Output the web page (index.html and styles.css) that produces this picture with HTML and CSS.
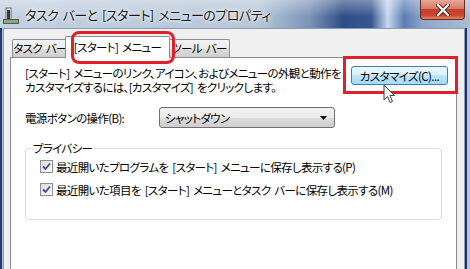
FILE: index.html
```html
<!DOCTYPE html>
<html lang="ja">
<head>
    <meta charset="UTF-8">
    <meta name="viewport" content="width=device-width, initial-scale=1.0">
    <title>タスク バーと [スタート] メニューのプロパティ</title>
    <link rel="stylesheet" href="styles.css">
</head>
<body>
    <div class="window">
        <div class="titlebar">
            <svg class="app-icon" width="16" height="17" viewBox="0 0 16 17">
                <rect x="3" y="1" width="5" height="12" fill="#f4f4f4" stroke="#6b6b6b"/>
                <rect x="4" y="3" width="3" height="9" fill="#3b3b3b"/>
                <rect x="0.5" y="12.5" width="15" height="4" fill="#8fa58a" stroke="#4d5d4a"/>
            </svg>
            <span class="title">タスク バーと [スタート] メニューのプロパティ</span>
            <div class="close">
                <svg width="14" height="12" viewBox="0 0 14 12">
                    <path d="M2 1 L12 11 M12 1 L2 11" stroke="#5a1f17" stroke-width="4" stroke-linecap="round"/>
                    <path d="M2 1 L12 11 M12 1 L2 11" stroke="#ffffff" stroke-width="2.2" stroke-linecap="round"/>
                </svg>
            </div>
        </div>
        <div class="frame">
            <div class="client">
                <div class="tabs">
                    <div class="tab tab-taskbar">タスク バー</div>
                    <div class="tab selected">
                        [スタート] メニュー
                        <span class="mark mark-tab"></span>
                    </div>
                    <div class="tab tab-toolbar">ツール バー</div>
                </div>
                <div class="panel">
                    <div class="intro">
                        <p>[スタート] メニューのリンク、アイコン、およびメニューの外観と動作を<br>カスタマイズするには、[カスタマイズ] をクリックします。</p>
                        <div class="btn-wrap">
                            <button class="btn hover">カスタマイズ(C)...</button>
                            <span class="mark mark-btn"></span>
                            <svg class="cursor" width="13" height="21" viewBox="0 0 13 21">
                                <path d="M1 1 L1 16 L4.5 12.5 L7 18.5 L9.5 17.5 L7 11.5 L11.5 11.5 Z" fill="#f4f6f8" stroke="#3a3f46" stroke-width="1" stroke-linejoin="round"/>
                            </svg>
                        </div>
                    </div>
                    <div class="power-row">
                        <label for="power">電源ボタンの操作(B):</label>
                        <div class="combo" id="power">
                            <span>シャットダウン</span>
                            <svg width="7" height="4" viewBox="0 0 7 4"><path d="M0 0 H7 L3.5 4 Z" fill="#000"/></svg>
                        </div>
                    </div>
                    <fieldset class="group">
                        <legend>プライバシー</legend>
                        <div class="check-row">
                            <span class="check">
                                <svg width="9" height="9" viewBox="0 0 9 9"><path d="M1 4.5 L3.5 7 L8 1.5" fill="none" stroke="#3d4e86" stroke-width="1.8"/></svg>
                            </span>
                            最近開いたプログラムを [スタート] メニューに保存し表示する(P)
                        </div>
                        <div class="check-row">
                            <span class="check">
                                <svg width="9" height="9" viewBox="0 0 9 9"><path d="M1 4.5 L3.5 7 L8 1.5" fill="none" stroke="#3d4e86" stroke-width="1.8"/></svg>
                            </span>
                            最近開いた項目を [スタート] メニューとタスク バーに保存し表示する(M)
                        </div>
                    </fieldset>
                </div>
            </div>
        </div>
    </div>
</body>
</html>
```

FILE: styles.css
```css
body {
    margin: 0;
    width: 470px;
    height: 269px;
    overflow: hidden;
    font-family: "Noto Sans CJK JP", sans-serif;
    font-size: 11.5px;
    letter-spacing: -0.65px;
    word-spacing: 2px;
    font-feature-settings: "palt";
    color: #000;
    background-color: #23356e;
}
.window {
    height: 269px;
    display: flex;
    flex-direction: column;
}
.titlebar {
    height: 28px;
    flex: none;
    display: flex;
    align-items: center;
    background:
        linear-gradient(to bottom, rgba(255, 255, 255, 0.35), rgba(255, 255, 255, 0) 60%),
        linear-gradient(to right, #c3d1e0 0%, #b6c6d8 55%, #7a93b8 66%, #2f4d86 73%, #38578f 79%, #c6d8f0 82.5%, #5b7cb4 86%, #8ea6c8 90%, #aabdd4 100%);
}
.app-icon {
    margin-left: 3px;
    margin-top: 2px;
}
.title {
    margin-left: 6px;
    font-size: 13px;
    letter-spacing: -0.5px;
    color: #1b1b1b;
    text-shadow: 0 0 6px #fff, 0 0 3px #fff;
}
.close {
    margin-left: auto;
    margin-right: 5px;
    align-self: flex-start;
    width: 45px;
    height: 20px;
    box-sizing: border-box;
    border: 1px solid #6b2a22;
    border-top: none;
    border-radius: 0 0 4px 4px;
    background: linear-gradient(to bottom, #e8a899 0%, #d67a68 45%, #c3432f 50%, #c8452d 80%, #de8a60 100%);
    display: flex;
    align-items: center;
    justify-content: center;
}
.frame {
    flex: 1;
    display: flex;
    padding: 0 5px 0 3px;
    background: linear-gradient(to right, #24386f 0 2px, #b3c2d8 2px, #b3c2d8 calc(100% - 5px), #1f2f72 calc(100% - 5px), #1f2f72 calc(100% - 3px), #b9c6da calc(100% - 3px));
}
.client {
    flex: 1;
    display: flex;
    flex-direction: column;
    background-color: #f0f0f0;
    border: 1px solid #8d9db5;
    border-bottom: none;
    padding: 7px 7px 0 6px;
}
.tabs {
    display: flex;
    align-items: flex-end;
    padding-left: 2px;
    height: 21px;
}
.tab {
    height: 18px;
    box-sizing: border-box;
    border: 1px solid #898c95;
    border-bottom: none;
    border-radius: 2px 2px 0 0;
    background: linear-gradient(to bottom, #f3f3f3 0%, #ebebeb 50%, #dddddd 50%, #cfcfcf 100%);
    line-height: 16px;
    margin-right: -1px;
    text-align: center;
    white-space: nowrap;
}
.tab-taskbar {
    width: 56px;
}
.tab-toolbar {
    width: 62px;
}
.tab.selected {
    position: relative;
    z-index: 1;
    width: 105px;
    height: 22px;
    margin: 0 -2px -1px -2px;
    background: #fff;
    line-height: 20px;
}
.mark {
    position: absolute;
    border: 3px solid #e0212b;
    pointer-events: none;
}
.mark-tab {
    left: 5px;
    right: -6px;
    top: -6px;
    bottom: -6px;
    border-radius: 8px;
}
.panel {
    flex: 1;
    background-color: #fff;
    border: 1px solid #898c95;
    border-bottom: none;
    padding: 8px 8px 0 14px;
}
.intro {
    display: flex;
    align-items: flex-start;
}
.intro p {
    margin: 0;
    line-height: 14px;
    white-space: nowrap;
}
.btn-wrap {
    position: relative;
    margin-left: auto;
}
.btn {
    width: 97px;
    height: 19px;
    padding: 0;
    font-family: inherit;
    font-size: 11.5px;
    letter-spacing: -0.6px;
    font-feature-settings: "palt";
    color: #000;
    border: 1px solid #707070;
    border-radius: 3px;
    background: linear-gradient(to bottom, #f2f2f2 0%, #ebebeb 50%, #dddddd 50%, #cfcfcf 100%);
    display: block;
}
.btn.hover {
    border-color: #3c7fb1;
    background: linear-gradient(to bottom, #eaf6fd 0%, #d9f0fc 50%, #bee6fd 50%, #a7d9f5 100%);
}
.mark-btn {
    left: -8px;
    right: -10px;
    top: -10px;
    bottom: -9px;
}
.cursor {
    position: absolute;
    left: 32px;
    top: 18px;
}
.power-row {
    display: flex;
    align-items: center;
    margin-top: 13px;
}
.power-row label {
    width: 134px;
}
.combo {
    width: 176px;
    height: 21px;
    box-sizing: border-box;
    border: 1px solid #707070;
    border-radius: 3px;
    background: linear-gradient(to bottom, #f2f2f2 0%, #ebebeb 50%, #dddddd 50%, #cfcfcf 100%);
    display: flex;
    align-items: center;
    justify-content: space-between;
    padding: 0 7px 0 5px;
}
.group {
    margin: 13px 6px 0 0;
    padding: 0 0 18px 14px;
    border: 1px solid #d5dfe5;
    border-radius: 3px;
    box-shadow: inset 1px 1px 0 #fff;
}
.group legend {
    padding: 0 2px;
    margin-left: -9px;
    line-height: 14px;
}
.check-row {
    display: flex;
    align-items: center;
    height: 23px;
    white-space: nowrap;
}
.check {
    width: 13px;
    height: 13px;
    box-sizing: border-box;
    border: 1px solid #8e8f8f;
    background: linear-gradient(135deg, #dcdcdc, #fbfbfb);
    margin-right: 3px;
    display: flex;
    align-items: center;
    justify-content: center;
}
```
